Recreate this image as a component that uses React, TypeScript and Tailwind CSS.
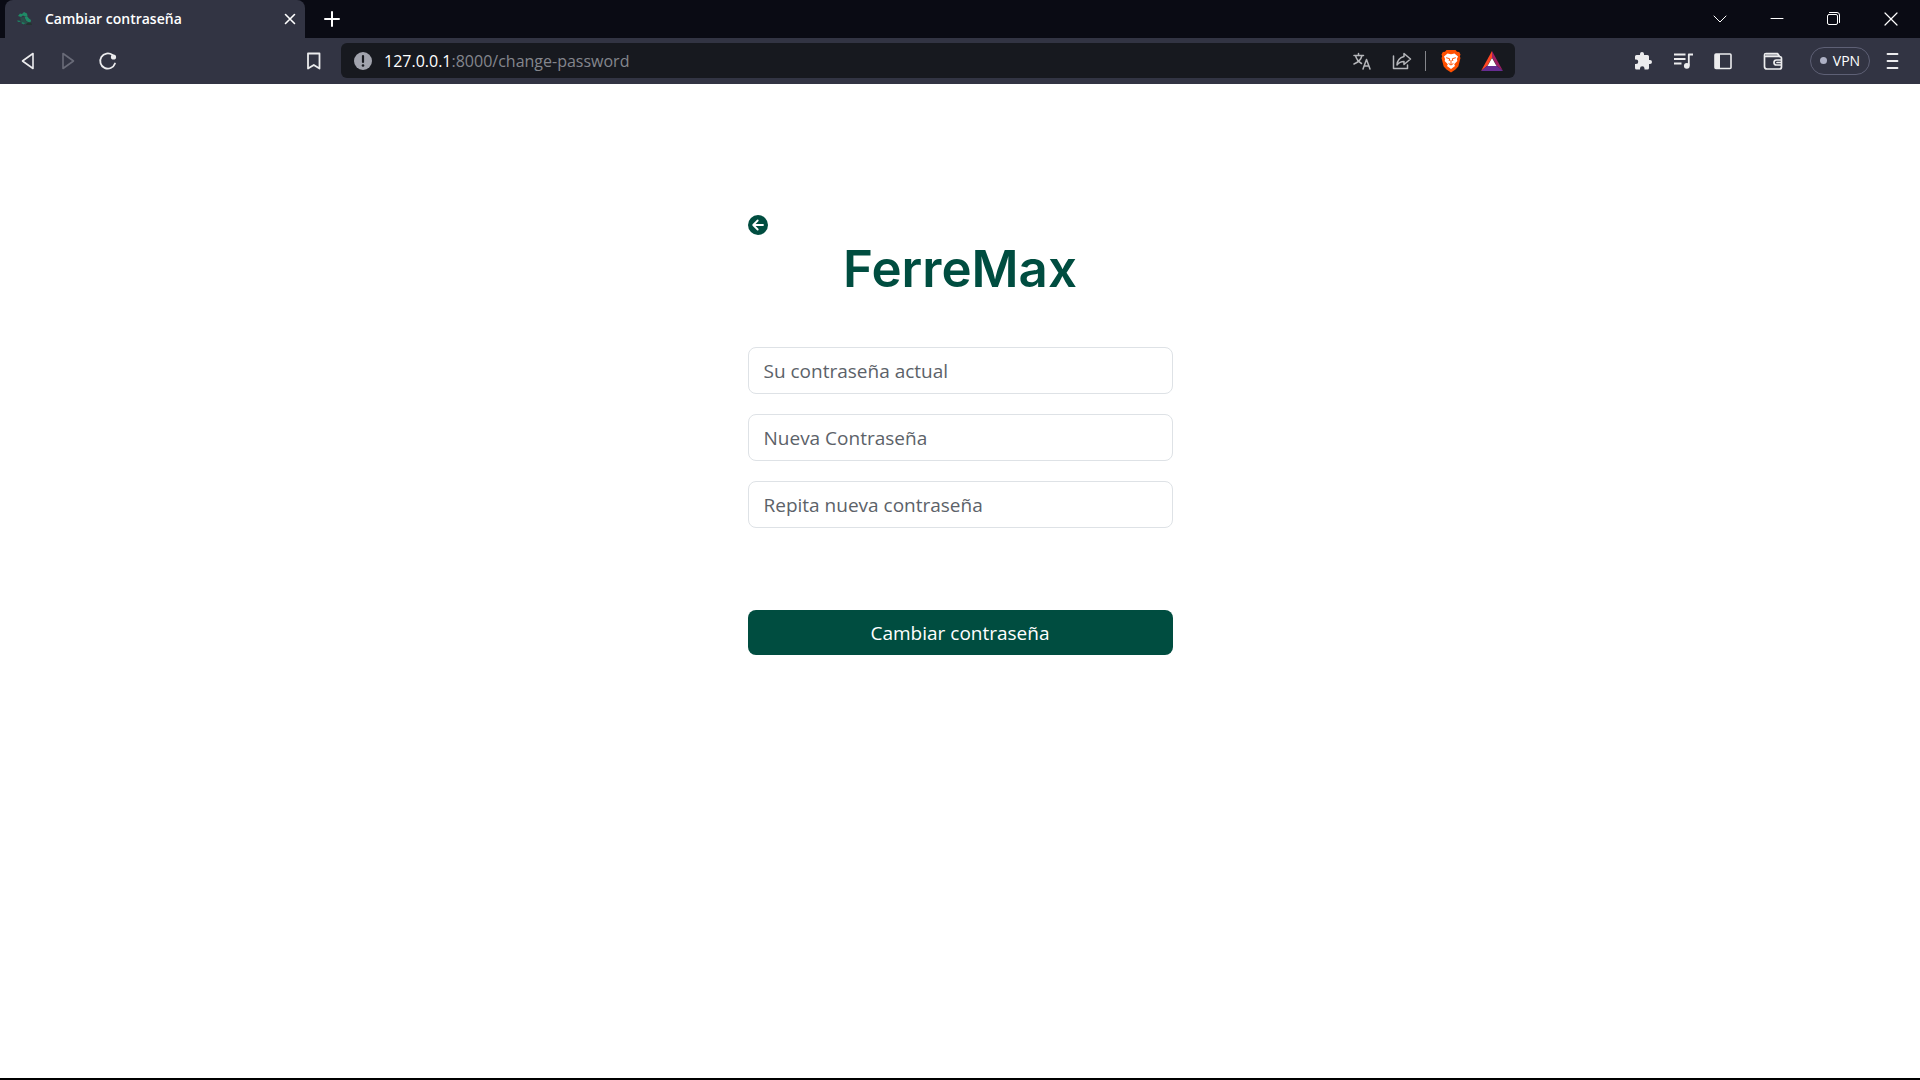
import type { ReactNode } from "react";

type IconProps = { children: ReactNode; className?: string; box?: string };

function Icon({ children, className = "size-5", box = "0 0 20 20" }: IconProps) {
  return (
    <svg
      viewBox={box}
      className={className}
      fill="none"
      stroke="currentColor"
      strokeWidth="1.6"
      strokeLinecap="round"
      strokeLinejoin="round"
      aria-hidden="true"
    >
      {children}
    </svg>
  );
}

function BarButton({ label, children, className = "" }: { label: string; children: ReactNode; className?: string }) {
  return (
    <button type="button" aria-label={label} className={`flex shrink-0 items-center justify-center ${className}`}>
      {children}
    </button>
  );
}

function TabStrip() {
  return (
    <div className="flex h-[38px] items-center bg-[#0a0b14] pl-[5px] text-white">
      <div className="flex h-full w-[300px] items-center rounded-t-lg bg-[#323443] pr-[5px] pl-3">
        <svg viewBox="0 0 16 16" className="size-4" aria-hidden="true">
          <path d="M1 5 3 2.500 5 3 7 1 10 2.500 10.500 5 8 5.500 6 4.500 4 6Z" fill="#1f8a66" />
          <path d="M7.500 6 10 5 12 7.500 14 9 13.500 11.500 11 11 9 9.500Z" fill="#1f8a66" />
          <path d="M3 6.500 7 6 8.500 9.500 11 11.500 9 13.500 5.500 12 1 10.500 4 9.500Z" fill="#2a4f4a" />
          <path d="M0 9.500h2.500l1 1.500H1ZM5 11l3 1-1 1.500-2.500-1Z" fill="#1f7d61" />
          <path d="M10 12 14 11.500 15 14H9Z" fill="#24332f" />
        </svg>
        <span className="ml-3 grow text-sm font-semibold">Cambiar contraseña</span>
        <BarButton label="Cerrar pestaña" className="size-5">
          <Icon className="size-4" box="0 0 16 16">
            <path d="m3.500 3.500 9 9M12.500 3.500l-9 9" />
          </Icon>
        </BarButton>
      </div>
      <BarButton label="Nueva pestaña" className="ml-[17px] size-5">
        <Icon>
          <path d="M10 3v14M3 10h14" strokeWidth="2" />
        </Icon>
      </BarButton>
      <div className="ml-auto flex gap-[37px] pr-[19px]">
        <BarButton label="Buscar pestañas">
          <Icon>
            <path d="m4 7 6 6 6-6" strokeWidth="1" />
          </Icon>
        </BarButton>
        <BarButton label="Minimizar">
          <Icon>
            <path d="M4 9.500h12" strokeWidth="1" />
          </Icon>
        </BarButton>
        <BarButton label="Restaurar">
          <Icon>
            <rect x="3.500" y="5.500" width="10" height="10" rx="1.500" strokeWidth="1" />
            <path d="M5.500 3.500h7.500a2.500 2.500 0 0 1 2.500 2.500v7.500" strokeWidth="1" />
          </Icon>
        </BarButton>
        <BarButton label="Cerrar ventana">
          <Icon>
            <path d="m4 4 12 12M16 4 4 16" strokeWidth="1.200" />
          </Icon>
        </BarButton>
      </div>
    </div>
  );
}

function BraveLion() {
  return (
    <svg viewBox="0 0 20 24" className="h-6 w-5" aria-hidden="true">
      <path d="M5.500 1h9L16 2.700l2.200.2L19.500 5.500l-.7 2 .7 1.500-2.200 8.500L14.500 20.500 10 23.500 5.500 20.500 2.700 17.500.5 9l.7-1.500-.7-2L1.800 2.900 4 2.700Z" fill="#ff5000" />
      <path d="M10 5.200 13.500 4.500 17 7.500 15.900 10 16.300 12 13.200 15.300 14 17 10 20 6 17l.8-1.700L3.700 12l.4-2L3 7.500 6.500 4.500Z" fill="#fff" />
      <path d="M5.200 8.700 8.600 9.700 8.200 12M14.800 8.700l-3.400 1 .4 2.300M7.600 14.500 10 16l2.400-1.500M10 11v4" fill="none" stroke="#ff5000" strokeWidth="1" />
    </svg>
  );
}

function BatTriangle() {
  return (
    <svg viewBox="0 0 22 20" className="h-5 w-[22px]" aria-hidden="true">
      <path d="M11 0v6.500L6.500 14.500 0 20Z" fill="#ff4724" />
      <path d="M11 0 22 20l-6.500-5.500L11 6.500Z" fill="#9e1f63" />
      <path d="M0 20 6.500 14.500h9L22 20Z" fill="#662d91" />
      <path d="m11 7 4.500 8h-9Z" fill="#fff" />
    </svg>
  );
}

function AddressBar() {
  return (
    <div className="ml-[17px] flex h-[35px] grow items-center rounded-md bg-[#17191f] pr-3 pl-[13px]">
      <svg viewBox="0 0 18 18" className="size-[18px] shrink-0" aria-hidden="true">
        <circle cx="9" cy="9" r="9" fill="#a1a3ad" />
        <path d="M9 4v6" stroke="#17191f" strokeWidth="2.200" strokeLinecap="round" />
        <circle cx="9" cy="13.500" r="1.300" fill="#17191f" />
      </svg>
      <div className="ml-3 grow text-base text-[#84868d]">
        <span className="text-white">127.0.0.1</span>:8000/change-password
      </div>
      <div className="flex items-center text-[#b5b6ba]">
        <BarButton label="Traducir">
          <Icon>
            <path d="M2 4.500h9.500M6.500 2.500v2M3.500 4.500c1 4 3.500 6.500 6 8M10 4.500c-1 4-4 7-8 8.500M11 18l3.500-9.500L18 18M12.200 15h4.600" strokeWidth="1.500" />
          </Icon>
        </BarButton>
        <BarButton label="Compartir" className="ml-5">
          <Icon>
            <path d="M1.500 5v12.500h14V14M12 2.500 18.500 8 12 13.500V10.500c-3 0-5 .8-7 3.500.3-5 3-7.500 7-8.500Z" strokeWidth="1.500" />
          </Icon>
        </BarButton>
        <span className="ml-[13px] h-5 w-px bg-[#85868b]" />
        <BarButton label="Brave Shields" className="ml-[15px]">
          <BraveLion />
        </BarButton>
        <BarButton label="Brave Rewards" className="ml-5">
          <BatTriangle />
        </BarButton>
      </div>
    </div>
  );
}

function Toolbar() {
  return (
    <div className="flex h-[46px] items-center bg-[#323443] pr-[17px] pb-px pl-[18px] text-[#ececee]">
      <BarButton label="Atrás">
        <Icon>
          <path d="M15 2.500v15L4.500 10Z" />
        </Icon>
      </BarButton>
      <BarButton label="Adelante" className="ml-5 text-[#696b78]">
        <Icon>
          <path d="M5 2.500v15L15.500 10Z" />
        </Icon>
      </BarButton>
      <BarButton label="Recargar" className="ml-5">
        <Icon>
          <path d="M17 12.500A7.600 7.600 0 1 1 14.500 4" strokeWidth="1.800" />
          <circle cx="15.500" cy="6" r="2.600" fill="currentColor" stroke="none" />
        </Icon>
      </BarButton>
      <BarButton label="Guardar marcador" className="ml-[186px]">
        <Icon>
          <path d="M4 2.500h11.500v15L9.800 14 4 17.500Z" strokeWidth="1.800" />
        </Icon>
      </BarButton>
      <AddressBar />
      <div className="ml-[118px] flex items-center">
        <BarButton label="Extensiones">
          <Icon>
            <path
              d="M17 9h-1V5.500A1.500 1.500 0 0 0 14.500 4H11V3a2 2 0 0 0-4 0v1H3.500A1.500 1.500 0 0 0 2 5.500v3h1a2.200 2.200 0 0 1 0 4.500H2v4A1.500 1.500 0 0 0 3.500 18.500H7v-1a2.200 2.200 0 0 1 4.500 0v1h3a1.500 1.500 0 0 0 1.500-1.500v-4h1a2 2 0 0 0 0-4Z"
              fill="currentColor"
              stroke="none"
            />
          </Icon>
        </BarButton>
        <BarButton label="Control multimedia" className="ml-5">
          <Icon>
            <path d="M1 3.500h11.500M1 8h11.500M1 12.500h7.500M20 3.500h-4.200v11" strokeLinecap="butt" strokeWidth="1.800" />
            <circle cx="13.800" cy="14.800" r="2.900" fill="currentColor" stroke="none" />
          </Icon>
        </BarButton>
        <BarButton label="Barra lateral" className="ml-5">
          <Icon>
            <rect x="2" y="3" width="16" height="14.500" rx="1" />
            <path d="M2 3h5v14.500H2Z" fill="currentColor" stroke="none" />
          </Icon>
        </BarButton>
        <BarButton label="Cartera" className="ml-[30px]">
          <Icon>
            <path d="M1.500 4v11.500a2.500 2.500 0 0 0 2.500 2.500h12.500a2 2 0 0 0 2-2V7.500a2 2 0 0 0-2-2H3a1.500 1.500 0 0 1 0-3h11.500L16.500 5.500M18.500 9h-5a2.500 2.500 0 0 0 0 5h5M14 11.500h4.500" strokeWidth="1.700" />
            <path d="M3 2.800h11.500l1.700 2.500H3Z" fill="currentColor" fillOpacity="0.6" stroke="none" />
          </Icon>
        </BarButton>
        <button type="button" className="ml-[27px] flex h-7 w-[60px] shrink-0 items-center justify-center gap-1.5 rounded-full border border-[#5e6075] text-sm text-white">
          <span className="size-[7px] rounded-full bg-[#adb0c4]" />
          VPN
        </button>
        <BarButton label="Menú" className="ml-[13px]">
          <Icon>
            <path d="M4.500 3h10M4.500 10h10M4.500 17h10" strokeWidth="1.800" />
          </Icon>
        </BarButton>
      </div>
    </div>
  );
}

const fields = [
  { id: "current", label: "Su contraseña actual" },
  { id: "new", label: "Nueva Contraseña" },
  { id: "repeat", label: "Repita nueva contraseña" },
];

function PasswordForm() {
  return (
    <form className="mx-auto mt-[131px] flex w-full max-w-[425px] flex-col" onSubmit={(e) => e.preventDefault()}>
      <a href="#volver" aria-label="Volver" className="self-start">
        <svg viewBox="0 0 20 20" className="size-5" aria-hidden="true">
          <circle cx="10" cy="10" r="10" fill="#004d40" />
          <path d="M15 10H5.500M9.700 5.500 5.200 10l4.500 4.500" fill="none" stroke="#fff" strokeWidth="1.800" strokeLinecap="round" strokeLinejoin="round" />
        </svg>
      </a>
      <h1 className="mt-1 text-center font-[Inter] text-[51px] leading-[60px] font-semibold text-[#004d40]">FerreMax</h1>
      <div className="mt-12 flex flex-col gap-5">
        {fields.map((f) => (
          <input
            key={f.id}
            id={f.id}
            type="password"
            aria-label={f.label}
            placeholder={f.label}
            className="h-[47px] w-full rounded-lg border border-[#dee2e6] px-[15px] text-[19px] text-[#212529] placeholder:text-[#5c6269]"
          />
        ))}
      </div>
      <button type="submit" className="mt-[82px] h-[45px] rounded-lg bg-[#004d40] pt-0.5 text-[19px] text-white">
        Cambiar contraseña
      </button>
    </form>
  );
}

export default function App() {
  return (
    <div className="flex min-h-screen flex-col border-b-2 border-black bg-white font-['Open_Sans','Noto_Sans',sans-serif]">
      <header>
        <TabStrip />
        <Toolbar />
      </header>
      <main className="grow">
        <PasswordForm />
      </main>
    </div>
  );
}
